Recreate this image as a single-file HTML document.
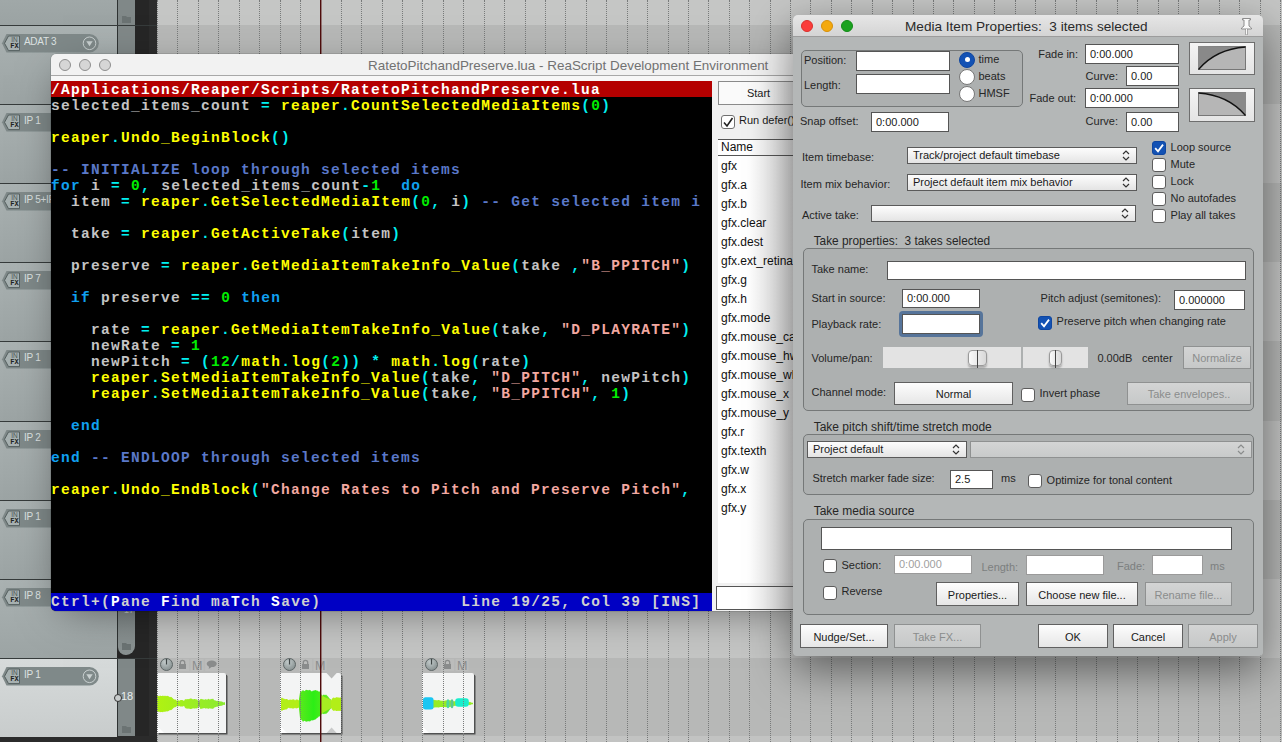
<!DOCTYPE html><html><head><meta charset="utf-8"><style>
*{box-sizing:border-box}
body{margin:0;width:1282px;height:742px;overflow:hidden;position:relative;background:#b6b7b6;font-family:"Liberation Sans",sans-serif}
.a{position:absolute}
.code{font-family:"Liberation Mono",monospace;font-weight:bold;font-size:14.5px;letter-spacing:1.3px;white-space:pre;line-height:16px}
.g{color:#c4c4c4}.c{color:#00f0f0}.y{color:#ffff00}.n{color:#00ee00}.k{color:#10a0f0}.m{color:#5a78c8}.s{color:#f2a8a0}
.dl{font-size:11px;color:#1c1c1c;white-space:pre;line-height:13px}
.inp{background:#fff;border:1px solid #555}
.grp{border:1px solid #757878;border-radius:5px;background:#adb0b0}
.btn{background:linear-gradient(#fdfdfd,#e6e6e6);border:1px solid #606060;font-size:11px;color:#1a1a1a;text-align:center;white-space:pre}
.btnd{background:linear-gradient(#d3d4d4,#c6c8c8);border:1px solid #8f9191;font-size:11px;color:#8a8c8c;text-align:center;white-space:pre}
.dd{background:linear-gradient(#fdfdfd,#e4e4e4);border:1px solid #5a5a5a;font-size:11px;color:#1a1a1a;white-space:pre}
.cb{background:#fff;border:1px solid #5c5c5c;border-radius:3px}
.cbc{background:#1352b4;border:1px solid #0f46a0;border-radius:3px}
.li{font-size:12px;color:#111;white-space:pre;line-height:14px}
</style></head><body>
<div class="a" style="left:157px;top:0;width:1125px;height:25px;background:#c5c6c5"></div>
<div class="a" style="left:157px;top:25px;width:1125px;height:79px;background:#b7b8b7"></div>
<div class="a" style="left:157px;top:104px;width:1125px;height:79px;background:#c4c5c4"></div>
<div class="a" style="left:157px;top:183px;width:1125px;height:79px;background:#b7b8b7"></div>
<div class="a" style="left:157px;top:262px;width:1125px;height:79px;background:#c4c5c4"></div>
<div class="a" style="left:157px;top:341px;width:1125px;height:80px;background:#b7b8b7"></div>
<div class="a" style="left:157px;top:421px;width:1125px;height:79px;background:#c4c5c4"></div>
<div class="a" style="left:157px;top:500px;width:1125px;height:79px;background:#b7b8b7"></div>
<div class="a" style="left:157px;top:579px;width:1125px;height:79px;background:#c4c5c4"></div>
<div class="a" style="left:157px;top:658px;width:1125px;height:79px;background:#b7b8b7"></div>
<div class="a" style="left:157px;top:736px;width:1125px;height:6px;background:#c2c3c2"></div>
<div class="a" style="left:0;top:736px;width:157px;height:6px;background:#2b2b2b"></div>
<div class="a" style="left:0;top:0;width:117px;height:736px;background:#a4abab"></div>
<div class="a" style="left:0;top:25px;width:117px;height:79px;background:linear-gradient(#aab2b2,#9ca4a4)"></div>
<div class="a" style="left:0;top:25px;width:157px;height:1px;background:#3a3f3f"></div>
<svg class="a" style="left:0;top:34px" width="100" height="20"><path d="M6.5 0 H89.5 A9.3 9.3 0 0 1 89.5 18.6 H6.5 L2 9.3 Z" fill="#7f8989"/><path d="M8.5 2 H19.5 V16.6 H8.5 L4.5 9.3 Z" fill="#a7b1b1" stroke="#566060" stroke-width="1"/><circle cx="89.5" cy="9.3" r="6.3" fill="none" stroke="#c9d0d0" stroke-width="1"/><path d="M86.3 7.3 H92.7 L89.5 12.3 Z" fill="#c9d0d0"/></svg>
<div class="a" style="left:9px;top:36px;width:11px;font:6.5px 'Liberation Sans';color:#4e5858;text-align:center;line-height:7px;letter-spacing:0px">IN</div>
<div class="a" style="left:9px;top:43px;width:11px;font:bold 7px 'Liberation Mono';color:#1e2424;text-align:center;line-height:7px;letter-spacing:0px">FX</div>
<div class="a" style="left:24px;top:35px;font-size:10px;letter-spacing:-0.3px;color:#dde2e2;white-space:pre;line-height:14px">ADAT 3</div>
<div class="a" style="left:0;top:104px;width:117px;height:79px;background:linear-gradient(#aab2b2,#9ca4a4)"></div>
<div class="a" style="left:0;top:104px;width:157px;height:1px;background:#3a3f3f"></div>
<svg class="a" style="left:0;top:113px" width="100" height="20"><path d="M6.5 0 H89.5 A9.3 9.3 0 0 1 89.5 18.6 H6.5 L2 9.3 Z" fill="#7f8989"/><path d="M8.5 2 H19.5 V16.6 H8.5 L4.5 9.3 Z" fill="#a7b1b1" stroke="#566060" stroke-width="1"/><circle cx="89.5" cy="9.3" r="6.3" fill="none" stroke="#c9d0d0" stroke-width="1"/><path d="M86.3 7.3 H92.7 L89.5 12.3 Z" fill="#c9d0d0"/></svg>
<div class="a" style="left:9px;top:115px;width:11px;font:6.5px 'Liberation Sans';color:#4e5858;text-align:center;line-height:7px;letter-spacing:0px">IN</div>
<div class="a" style="left:9px;top:122px;width:11px;font:bold 7px 'Liberation Mono';color:#1e2424;text-align:center;line-height:7px;letter-spacing:0px">FX</div>
<div class="a" style="left:24px;top:114px;font-size:10px;letter-spacing:-0.3px;color:#dde2e2;white-space:pre;line-height:14px">IP 1</div>
<div class="a" style="left:0;top:183px;width:117px;height:79px;background:linear-gradient(#aab2b2,#9ca4a4)"></div>
<div class="a" style="left:0;top:183px;width:157px;height:1px;background:#3a3f3f"></div>
<svg class="a" style="left:0;top:192px" width="100" height="20"><path d="M6.5 0 H89.5 A9.3 9.3 0 0 1 89.5 18.6 H6.5 L2 9.3 Z" fill="#7f8989"/><path d="M8.5 2 H19.5 V16.6 H8.5 L4.5 9.3 Z" fill="#a7b1b1" stroke="#566060" stroke-width="1"/><circle cx="89.5" cy="9.3" r="6.3" fill="none" stroke="#c9d0d0" stroke-width="1"/><path d="M86.3 7.3 H92.7 L89.5 12.3 Z" fill="#c9d0d0"/></svg>
<div class="a" style="left:9px;top:194px;width:11px;font:6.5px 'Liberation Sans';color:#4e5858;text-align:center;line-height:7px;letter-spacing:0px">IN</div>
<div class="a" style="left:9px;top:201px;width:11px;font:bold 7px 'Liberation Mono';color:#1e2424;text-align:center;line-height:7px;letter-spacing:0px">FX</div>
<div class="a" style="left:24px;top:193px;font-size:10px;letter-spacing:-0.3px;color:#dde2e2;white-space:pre;line-height:14px">IP 5+IP 6</div>
<div class="a" style="left:0;top:262px;width:117px;height:79px;background:linear-gradient(#aab2b2,#9ca4a4)"></div>
<div class="a" style="left:0;top:262px;width:157px;height:1px;background:#3a3f3f"></div>
<svg class="a" style="left:0;top:271px" width="100" height="20"><path d="M6.5 0 H89.5 A9.3 9.3 0 0 1 89.5 18.6 H6.5 L2 9.3 Z" fill="#7f8989"/><path d="M8.5 2 H19.5 V16.6 H8.5 L4.5 9.3 Z" fill="#a7b1b1" stroke="#566060" stroke-width="1"/><circle cx="89.5" cy="9.3" r="6.3" fill="none" stroke="#c9d0d0" stroke-width="1"/><path d="M86.3 7.3 H92.7 L89.5 12.3 Z" fill="#c9d0d0"/></svg>
<div class="a" style="left:9px;top:273px;width:11px;font:6.5px 'Liberation Sans';color:#4e5858;text-align:center;line-height:7px;letter-spacing:0px">IN</div>
<div class="a" style="left:9px;top:280px;width:11px;font:bold 7px 'Liberation Mono';color:#1e2424;text-align:center;line-height:7px;letter-spacing:0px">FX</div>
<div class="a" style="left:24px;top:272px;font-size:10px;letter-spacing:-0.3px;color:#dde2e2;white-space:pre;line-height:14px">IP 7</div>
<div class="a" style="left:0;top:341px;width:117px;height:80px;background:linear-gradient(#aab2b2,#9ca4a4)"></div>
<div class="a" style="left:0;top:341px;width:157px;height:1px;background:#3a3f3f"></div>
<svg class="a" style="left:0;top:350px" width="100" height="20"><path d="M6.5 0 H89.5 A9.3 9.3 0 0 1 89.5 18.6 H6.5 L2 9.3 Z" fill="#7f8989"/><path d="M8.5 2 H19.5 V16.6 H8.5 L4.5 9.3 Z" fill="#a7b1b1" stroke="#566060" stroke-width="1"/><circle cx="89.5" cy="9.3" r="6.3" fill="none" stroke="#c9d0d0" stroke-width="1"/><path d="M86.3 7.3 H92.7 L89.5 12.3 Z" fill="#c9d0d0"/></svg>
<div class="a" style="left:9px;top:352px;width:11px;font:6.5px 'Liberation Sans';color:#4e5858;text-align:center;line-height:7px;letter-spacing:0px">IN</div>
<div class="a" style="left:9px;top:359px;width:11px;font:bold 7px 'Liberation Mono';color:#1e2424;text-align:center;line-height:7px;letter-spacing:0px">FX</div>
<div class="a" style="left:24px;top:351px;font-size:10px;letter-spacing:-0.3px;color:#dde2e2;white-space:pre;line-height:14px">IP 1</div>
<div class="a" style="left:0;top:421px;width:117px;height:79px;background:linear-gradient(#aab2b2,#9ca4a4)"></div>
<div class="a" style="left:0;top:421px;width:157px;height:1px;background:#3a3f3f"></div>
<svg class="a" style="left:0;top:430px" width="100" height="20"><path d="M6.5 0 H89.5 A9.3 9.3 0 0 1 89.5 18.6 H6.5 L2 9.3 Z" fill="#7f8989"/><path d="M8.5 2 H19.5 V16.6 H8.5 L4.5 9.3 Z" fill="#a7b1b1" stroke="#566060" stroke-width="1"/><circle cx="89.5" cy="9.3" r="6.3" fill="none" stroke="#c9d0d0" stroke-width="1"/><path d="M86.3 7.3 H92.7 L89.5 12.3 Z" fill="#c9d0d0"/></svg>
<div class="a" style="left:9px;top:432px;width:11px;font:6.5px 'Liberation Sans';color:#4e5858;text-align:center;line-height:7px;letter-spacing:0px">IN</div>
<div class="a" style="left:9px;top:439px;width:11px;font:bold 7px 'Liberation Mono';color:#1e2424;text-align:center;line-height:7px;letter-spacing:0px">FX</div>
<div class="a" style="left:24px;top:431px;font-size:10px;letter-spacing:-0.3px;color:#dde2e2;white-space:pre;line-height:14px">IP 2</div>
<div class="a" style="left:0;top:500px;width:117px;height:79px;background:linear-gradient(#aab2b2,#9ca4a4)"></div>
<div class="a" style="left:0;top:500px;width:157px;height:1px;background:#3a3f3f"></div>
<svg class="a" style="left:0;top:509px" width="100" height="20"><path d="M6.5 0 H89.5 A9.3 9.3 0 0 1 89.5 18.6 H6.5 L2 9.3 Z" fill="#7f8989"/><path d="M8.5 2 H19.5 V16.6 H8.5 L4.5 9.3 Z" fill="#a7b1b1" stroke="#566060" stroke-width="1"/><circle cx="89.5" cy="9.3" r="6.3" fill="none" stroke="#c9d0d0" stroke-width="1"/><path d="M86.3 7.3 H92.7 L89.5 12.3 Z" fill="#c9d0d0"/></svg>
<div class="a" style="left:9px;top:511px;width:11px;font:6.5px 'Liberation Sans';color:#4e5858;text-align:center;line-height:7px;letter-spacing:0px">IN</div>
<div class="a" style="left:9px;top:518px;width:11px;font:bold 7px 'Liberation Mono';color:#1e2424;text-align:center;line-height:7px;letter-spacing:0px">FX</div>
<div class="a" style="left:24px;top:510px;font-size:10px;letter-spacing:-0.3px;color:#dde2e2;white-space:pre;line-height:14px">IP 1</div>
<div class="a" style="left:0;top:579px;width:117px;height:79px;background:linear-gradient(#aab2b2,#9ca4a4)"></div>
<div class="a" style="left:0;top:579px;width:157px;height:1px;background:#3a3f3f"></div>
<svg class="a" style="left:0;top:588px" width="100" height="20"><path d="M6.5 0 H89.5 A9.3 9.3 0 0 1 89.5 18.6 H6.5 L2 9.3 Z" fill="#7f8989"/><path d="M8.5 2 H19.5 V16.6 H8.5 L4.5 9.3 Z" fill="#a7b1b1" stroke="#566060" stroke-width="1"/><circle cx="89.5" cy="9.3" r="6.3" fill="none" stroke="#c9d0d0" stroke-width="1"/><path d="M86.3 7.3 H92.7 L89.5 12.3 Z" fill="#c9d0d0"/></svg>
<div class="a" style="left:9px;top:590px;width:11px;font:6.5px 'Liberation Sans';color:#4e5858;text-align:center;line-height:7px;letter-spacing:0px">IN</div>
<div class="a" style="left:9px;top:597px;width:11px;font:bold 7px 'Liberation Mono';color:#1e2424;text-align:center;line-height:7px;letter-spacing:0px">FX</div>
<div class="a" style="left:24px;top:589px;font-size:10px;letter-spacing:-0.3px;color:#dde2e2;white-space:pre;line-height:14px">IP 8</div>
<div class="a" style="left:0;top:658px;width:117px;height:79px;background:linear-gradient(#d7dbdb,#c8cccc)"></div>
<div class="a" style="left:0;top:658px;width:157px;height:1px;background:#3a3f3f"></div>
<svg class="a" style="left:0;top:667px" width="100" height="20"><path d="M6.5 0 H89.5 A9.3 9.3 0 0 1 89.5 18.6 H6.5 L2 9.3 Z" fill="#7f8989"/><path d="M8.5 2 H19.5 V16.6 H8.5 L4.5 9.3 Z" fill="#a7b1b1" stroke="#566060" stroke-width="1"/><circle cx="89.5" cy="9.3" r="6.3" fill="none" stroke="#c9d0d0" stroke-width="1"/><path d="M86.3 7.3 H92.7 L89.5 12.3 Z" fill="#c9d0d0"/></svg>
<div class="a" style="left:9px;top:669px;width:11px;font:6.5px 'Liberation Sans';color:#4e5858;text-align:center;line-height:7px;letter-spacing:0px">IN</div>
<div class="a" style="left:9px;top:676px;width:11px;font:bold 7px 'Liberation Mono';color:#1e2424;text-align:center;line-height:7px;letter-spacing:0px">FX</div>
<div class="a" style="left:24px;top:668px;font-size:10px;letter-spacing:-0.3px;color:#dde2e2;white-space:pre;line-height:14px">IP 1</div>
<div class="a" style="left:0;top:0;width:117px;height:25px;background:linear-gradient(#a0a8a8,#9ba3a3)"></div>
<div class="a" style="left:117px;top:0;width:1px;height:736px;background:#2e3232"></div>
<div class="a" style="left:118px;top:0;width:17px;height:736px;background:#808888"></div>
<div class="a" style="left:135px;top:0;width:14px;height:736px;background:#262626"></div>
<div class="a" style="left:149px;top:0;width:8px;height:736px;background:#2c2c2c"></div>
<div class="a" style="left:0;top:25px;width:157px;height:1px;background:#363b3b"></div>
<div class="a" style="left:0;top:104px;width:157px;height:1px;background:#363b3b"></div>
<div class="a" style="left:0;top:183px;width:157px;height:1px;background:#363b3b"></div>
<div class="a" style="left:0;top:262px;width:157px;height:1px;background:#363b3b"></div>
<div class="a" style="left:0;top:341px;width:157px;height:1px;background:#363b3b"></div>
<div class="a" style="left:0;top:421px;width:157px;height:1px;background:#363b3b"></div>
<div class="a" style="left:0;top:500px;width:157px;height:1px;background:#363b3b"></div>
<div class="a" style="left:0;top:579px;width:157px;height:1px;background:#363b3b"></div>
<div class="a" style="left:0;top:658px;width:157px;height:1px;background:#363b3b"></div>
<div class="a" style="left:117px;top:640px;width:19px;height:18px;background:#262626"></div>
<div class="a" style="left:117px;top:600px;width:18px;height:55px;background:#2e3232;border-radius:0 0 9px 9px"></div>
<div class="a" style="left:118px;top:600px;width:17px;height:55px;background:linear-gradient(#808888,#8a9292);border-radius:0 0 9px 8px"></div>
<svg class="a" style="left:122px;top:15px" width="9" height="8"><path d="M0 1 H4 L5 2 H9 V8 H0 Z" fill="#6b7373"/></svg>
<svg class="a" style="left:122px;top:642px" width="9" height="8"><path d="M0 1 H4 L5 2 H9 V8 H0 Z" fill="#6b7373"/></svg>
<svg class="a" style="left:122px;top:725px" width="9" height="8"><path d="M0 1 H4 L5 2 H9 V8 H0 Z" fill="#6b7373"/></svg>
<div class="a" style="left:121px;top:689px;font-size:11px;color:#e8eeee;line-height:14px">18</div>
<div class="a" style="left:114px;top:694px;width:8px;height:8px;border-radius:50%;background:#c8cccc;border:1.5px solid #333"></div>
<div class="a" style="left:124px;top:605px;font-size:9px;color:#c8cece;line-height:10px">17</div>
<div class="a" style="left:157px;top:673px;width:69px;height:60px;background:#f3f4f4;border-radius:0 2px 0 0;box-shadow:1.5px 1.5px 0 #505151"></div>
<svg class="a" style="left:0;top:0" width="1282" height="742"><defs><linearGradient id="w1" x1="0" x2="1"><stop offset="0" stop-color="#b0f212"/><stop offset="1" stop-color="#8aea30"/></linearGradient><linearGradient id="w2" x1="0" x2="1"><stop offset="0" stop-color="#5ee81e"/><stop offset="0.45" stop-color="#2cee16"/><stop offset="1" stop-color="#70e622"/></linearGradient></defs><polygon points="157,696.0 158,695.7 159,696.4 160,695.4 161,696.1 162,695.9 163,695.5 164,696.3 165,695.6 166,696.3 167,695.8 168,696.0 169,696.6 170,697.3 171,696.7 172,697.4 173,698.6 174,699.6 175,699.6 176,699.8 177,701.3 178,699.8 179,701.1 180,700.2 181,699.9 182,699.9 183,700.2 184,701.0 185,699.3 186,699.2 187,699.3 188,698.9 189,699.2 190,698.5 191,698.5 192,698.7 193,699.5 194,699.1 195,699.0 196,699.4 197,699.2 198,700.7 199,703.0 200,699.5 201,698.8 202,699.3 203,699.3 204,699.8 205,699.6 206,698.9 207,700.0 208,698.7 209,699.1 210,699.7 211,698.7 212,699.3 213,698.6 214,700.0 215,700.5 216,700.6 217,701.3 218,700.5 219,701.3 220,701.3 221,701.5 222,701.4 223,702.2 224,702.5 225,702.0 225,705.0 224,704.7 223,705.1 222,705.7 221,705.8 220,706.0 219,706.1 218,706.8 217,706.4 216,706.9 215,707.2 214,707.7 213,708.9 212,708.4 211,708.8 210,708.2 209,708.6 208,708.9 207,708.0 206,708.7 205,708.3 204,708.1 203,708.5 202,708.5 201,708.9 200,708.4 199,704.2 198,707.2 197,708.5 196,708.3 195,708.6 194,708.5 193,708.3 192,708.8 191,709.0 190,709.0 189,708.5 188,708.7 187,708.4 186,708.5 185,707.8 184,705.8 183,706.4 182,706.6 181,706.6 180,706.4 179,705.8 178,706.7 177,705.7 176,706.9 175,707.3 174,707.5 173,708.5 172,709.6 171,710.3 170,710.1 169,710.8 168,711.3 167,711.5 166,711.2 165,711.9 164,711.5 163,712.2 162,712.0 161,712.0 160,712.3 159,711.5 158,711.9 157,711.6" fill="url(#w1)"/><path d="M199 700 V707" stroke="#7a9050" stroke-width="1"/></svg>
<svg class="a" style="left:0;top:0" width="1282" height="742"><defs><radialGradient id="kn" cx="0.4" cy="0.3" r="0.8"><stop offset="0" stop-color="#c4cccc"/><stop offset="1" stop-color="#7f8989"/></radialGradient></defs><circle cx="166.5" cy="664.5" r="6" fill="url(#kn)" stroke="#5f6767" stroke-width="1"/><path d="M166.5 658.8 V664.5" stroke="#3f4646" stroke-width="1.2"/><polygon points="157,726 157,733 164,733" fill="#ffffff"/><rect x="176.0" y="659" width="13" height="12" fill="#bcbdbc"/><rect x="179.0" y="664" width="7" height="5" fill="#8a8c8c"/><path d="M180.3 664.5 V662.5 A2.2 2.2 0 0 1 184.7 662.5 V664.5" fill="none" stroke="#8a8c8c" stroke-width="1.3"/><rect x="190.6" y="659" width="13" height="12" fill="#bcbdbc"/><text x="197.1" y="669.8" text-anchor="middle" font-family="Liberation Sans" font-size="12.5" fill="#8c8e8e">M</text><rect x="205.2" y="659" width="13" height="12" fill="#bcbdbc"/><ellipse cx="211.7" cy="663.8" rx="5" ry="3.3" fill="#8a8c8c"/><path d="M209.2 666 L208.7 669 L212.2 666.5Z" fill="#8a8c8c"/></svg>
<div class="a" style="left:280px;top:673px;width:61px;height:60px;background:#f3f4f4;border-radius:0 2px 0 0;box-shadow:1.5px 1.5px 0 #505151"></div>
<svg class="a" style="left:0;top:0" width="1282" height="742"><defs><linearGradient id="w1" x1="0" x2="1"><stop offset="0" stop-color="#b0f212"/><stop offset="1" stop-color="#8aea30"/></linearGradient><linearGradient id="w2" x1="0" x2="1"><stop offset="0" stop-color="#5ee81e"/><stop offset="0.45" stop-color="#2cee16"/><stop offset="1" stop-color="#70e622"/></linearGradient></defs><polygon points="281,698.5 282,697.6 283,698.6 284,698.6 285,699.2 286,699.0 287,698.9 288,699.8 289,700.3 290,699.2 291,699.9 292,699.5 293,699.4 294,699.3 295,700.4 296,699.4 297,699.6 298,699.8 299,700.6 300,699.3 301,699.9 302,700.1 303,700.6 304,700.5 305,700.6 306,699.6 307,699.9 308,699.8 309,700.6 310,700.7 311,699.4 312,699.5 313,699.6 314,699.6 315,700.0 316,700.1 317,699.6 318,699.2 319,699.9 320,699.8 321,700.1 322,700.7 323,700.3 324,700.0 325,700.2 326,700.3 327,699.3 328,700.6 329,700.4 330,700.6 331,700.5 332,698.8 333,697.8 334,697.4 335,698.2 336,697.3 337,697.3 338,697.5 339,697.5 340,697.7 341,697.3 341,711.0 340,710.7 339,710.9 338,710.8 337,711.0 336,711.0 335,710.3 334,710.9 333,710.6 332,709.4 331,707.7 330,707.6 329,707.7 328,707.6 327,708.5 326,707.8 325,707.9 324,708.0 323,707.8 322,707.5 321,707.9 320,708.1 319,708.1 318,708.6 317,708.3 316,707.9 315,708.0 314,708.3 313,708.3 312,708.4 311,708.4 310,707.5 309,707.6 308,708.2 307,708.1 306,708.2 305,707.6 304,707.6 303,707.6 302,707.9 301,708.1 300,708.5 299,707.6 298,708.1 297,708.3 296,708.4 295,707.7 294,708.5 293,708.4 292,708.4 291,708.0 290,708.5 289,707.8 288,708.1 287,709.2 286,709.6 285,709.5 284,710.0 283,710.1 282,710.9 281,710.3" fill="#b2ee18"/><polygon points="299,699.0 300,692.4 301,691.5 302,691.2 303,689.7 304,691.3 305,690.8 306,689.8 307,690.0 308,690.2 309,690.2 310,689.7 311,691.1 312,691.4 313,690.5 314,690.7 315,690.0 316,690.2 317,690.8 318,690.8 319,692.1 320,690.9 321,693.9 322,695.9 323,695.1 324,694.5 325,695.3 326,694.4 327,695.5 328,696.5 329,697.7 330,698.9 331,699.5 331,708.3 330,709.4 329,710.8 328,712.3 327,713.1 326,714.0 325,713.5 324,714.2 323,713.8 322,713.4 321,714.9 320,716.5 319,716.2 318,717.6 317,718.1 316,719.1 315,719.7 314,719.8 313,720.4 312,720.3 311,720.5 310,721.6 309,721.3 308,721.3 307,721.5 306,721.7 305,721.1 304,720.7 303,722.0 302,720.3 301,719.4 300,718.1 299,708.7" fill="url(#w2)"/><polygon points="320.5,694.9 331,700 331,708 320.5,714.2" fill="#a6ec22"/><polygon points="326.5,673 336.7,673 331.6,678.5" fill="#b7b8b7"/><polygon points="326.5,733 336.7,733 331.6,727.5" fill="#c9caca"/></svg>
<svg class="a" style="left:0;top:0" width="1282" height="742"><defs><radialGradient id="kn" cx="0.4" cy="0.3" r="0.8"><stop offset="0" stop-color="#c4cccc"/><stop offset="1" stop-color="#7f8989"/></radialGradient></defs><circle cx="289.5" cy="664.5" r="6" fill="url(#kn)" stroke="#5f6767" stroke-width="1"/><path d="M289.5 658.8 V664.5" stroke="#3f4646" stroke-width="1.2"/><polygon points="280,726 280,733 287,733" fill="#ffffff"/><rect x="299.0" y="659" width="13" height="12" fill="#bcbdbc"/><rect x="302.0" y="664" width="7" height="5" fill="#8a8c8c"/><path d="M303.3 664.5 V662.5 A2.2 2.2 0 0 1 307.7 662.5 V664.5" fill="none" stroke="#8a8c8c" stroke-width="1.3"/><rect x="313.6" y="659" width="13" height="12" fill="#bcbdbc"/><text x="320.1" y="669.8" text-anchor="middle" font-family="Liberation Sans" font-size="12.5" fill="#8c8e8e">M</text></svg>
<div class="a" style="left:422px;top:673px;width:52px;height:60px;background:#f3f4f4;border-radius:0 2px 0 0;box-shadow:1.5px 1.5px 0 #505151"></div>
<svg class="a" style="left:0;top:0" width="1282" height="742"><polygon points="433,699.9 434,699.7 435,700.3 436,700.1 437,700.4 438,700.0 439,700.0 440,700.6 441,700.8 442,700.7 443,700.7 444,700.7 445,700.7 446,700.2 447,700.6 448,700.5 449,700.2 450,700.3 451,700.6 452,700.6 453,701.1 454,701.4 455,700.9 456,701.5 457,701.6 458,701.7 459,701.2 460,701.1 461,701.2 462,701.2 463,701.3 464,701.8 465,702.1 466,702.1 467,701.8 468,702.1 469,702.3 470,701.7 471,702.4 472,702.8 473,702.8 473,704.3 472,704.3 471,704.6 470,705.2 469,704.8 468,705.0 467,705.2 466,705.0 465,705.0 464,705.3 463,705.6 462,705.7 461,705.8 460,705.8 459,705.8 458,705.5 457,705.5 456,705.6 455,706.0 454,705.8 453,706.1 452,706.5 451,706.6 450,706.9 449,707.0 448,706.9 447,706.9 446,707.2 445,706.9 444,706.9 443,706.9 442,706.9 441,706.9 440,707.1 439,707.5 438,707.5 437,707.2 436,707.4 435,707.3 434,707.8 433,707.7" fill="#96ec24"/><rect x="423" y="697.2" width="10.5" height="12.3" rx="2.5" fill="#1ac6f2"/><ellipse cx="448" cy="703.8" rx="1.6" ry="4.5" fill="#48d8a0"/><ellipse cx="452" cy="703.8" rx="1.6" ry="4.5" fill="#58c890"/><rect x="455.2" y="698.2" width="13.6" height="8.5" rx="3" fill="#18eecc"/></svg>
<svg class="a" style="left:0;top:0" width="1282" height="742"><defs><radialGradient id="kn" cx="0.4" cy="0.3" r="0.8"><stop offset="0" stop-color="#c4cccc"/><stop offset="1" stop-color="#7f8989"/></radialGradient></defs><circle cx="431.5" cy="664.5" r="6" fill="url(#kn)" stroke="#5f6767" stroke-width="1"/><path d="M431.5 658.8 V664.5" stroke="#3f4646" stroke-width="1.2"/><polygon points="422,726 422,733 429,733" fill="#ffffff"/><rect x="441.0" y="659" width="13" height="12" fill="#bcbdbc"/><rect x="444.0" y="664" width="7" height="5" fill="#8a8c8c"/><path d="M445.3 664.5 V662.5 A2.2 2.2 0 0 1 449.7 662.5 V664.5" fill="none" stroke="#8a8c8c" stroke-width="1.3"/><rect x="455.6" y="659" width="13" height="12" fill="#bcbdbc"/><text x="462.1" y="669.8" text-anchor="middle" font-family="Liberation Sans" font-size="12.5" fill="#8c8e8e">M</text></svg>
<div class="a" style="left:157px;top:0;width:1px;height:742px;border-left:1px dotted #787a7a"></div>
<div class="a" style="left:177px;top:0;width:1px;height:742px;border-left:1px dotted #787a7a"></div>
<div class="a" style="left:198px;top:0;width:1px;height:742px;border-left:1px dotted #787a7a"></div>
<div class="a" style="left:218px;top:0;width:1px;height:742px;border-left:1px dotted #787a7a"></div>
<div class="a" style="left:239px;top:0;width:1px;height:742px;border-left:1px dotted #787a7a"></div>
<div class="a" style="left:259px;top:0;width:1px;height:742px;border-left:1px dotted #787a7a"></div>
<div class="a" style="left:280px;top:0;width:1px;height:742px;border-left:1px dotted #787a7a"></div>
<div class="a" style="left:300px;top:0;width:1px;height:742px;border-left:1px dotted #787a7a"></div>
<div class="a" style="left:320px;top:0;width:1px;height:742px;border-left:1px dotted #787a7a"></div>
<div class="a" style="left:341px;top:0;width:1px;height:742px;border-left:1px dotted #787a7a"></div>
<div class="a" style="left:361px;top:0;width:1px;height:742px;border-left:1px dotted #787a7a"></div>
<div class="a" style="left:382px;top:0;width:1px;height:742px;border-left:1px dotted #787a7a"></div>
<div class="a" style="left:402px;top:0;width:1px;height:742px;border-left:1px dotted #787a7a"></div>
<div class="a" style="left:422px;top:0;width:1px;height:742px;border-left:1px dotted #787a7a"></div>
<div class="a" style="left:443px;top:0;width:1px;height:742px;border-left:1px dotted #787a7a"></div>
<div class="a" style="left:463px;top:0;width:1px;height:742px;border-left:1px dotted #787a7a"></div>
<div class="a" style="left:484px;top:0;width:1px;height:742px;border-left:1px dotted #787a7a"></div>
<div class="a" style="left:504px;top:0;width:1px;height:742px;border-left:1px dotted #787a7a"></div>
<div class="a" style="left:525px;top:0;width:1px;height:742px;border-left:1px dotted #787a7a"></div>
<div class="a" style="left:545px;top:0;width:1px;height:742px;border-left:1px dotted #787a7a"></div>
<div class="a" style="left:565px;top:0;width:1px;height:742px;border-left:1px dotted #787a7a"></div>
<div class="a" style="left:586px;top:0;width:1px;height:742px;border-left:1px dotted #787a7a"></div>
<div class="a" style="left:606px;top:0;width:1px;height:742px;border-left:1px dotted #787a7a"></div>
<div class="a" style="left:627px;top:0;width:1px;height:742px;border-left:1px dotted #787a7a"></div>
<div class="a" style="left:647px;top:0;width:1px;height:742px;border-left:1px dotted #787a7a"></div>
<div class="a" style="left:668px;top:0;width:1px;height:742px;border-left:1px dotted #787a7a"></div>
<div class="a" style="left:688px;top:0;width:1px;height:742px;border-left:1px dotted #787a7a"></div>
<div class="a" style="left:708px;top:0;width:1px;height:742px;border-left:1px dotted #787a7a"></div>
<div class="a" style="left:729px;top:0;width:1px;height:742px;border-left:1px dotted #787a7a"></div>
<div class="a" style="left:749px;top:0;width:1px;height:742px;border-left:1px dotted #787a7a"></div>
<div class="a" style="left:770px;top:0;width:1px;height:742px;border-left:1px dotted #787a7a"></div>
<div class="a" style="left:790px;top:0;width:1px;height:742px;border-left:1px dotted #787a7a"></div>
<div class="a" style="left:810px;top:0;width:1px;height:742px;border-left:1px dotted #787a7a"></div>
<div class="a" style="left:831px;top:0;width:1px;height:742px;border-left:1px dotted #787a7a"></div>
<div class="a" style="left:851px;top:0;width:1px;height:742px;border-left:1px dotted #787a7a"></div>
<div class="a" style="left:872px;top:0;width:1px;height:742px;border-left:1px dotted #787a7a"></div>
<div class="a" style="left:892px;top:0;width:1px;height:742px;border-left:1px dotted #787a7a"></div>
<div class="a" style="left:913px;top:0;width:1px;height:742px;border-left:1px dotted #787a7a"></div>
<div class="a" style="left:933px;top:0;width:1px;height:742px;border-left:1px dotted #787a7a"></div>
<div class="a" style="left:953px;top:0;width:1px;height:742px;border-left:1px dotted #787a7a"></div>
<div class="a" style="left:974px;top:0;width:1px;height:742px;border-left:1px dotted #787a7a"></div>
<div class="a" style="left:994px;top:0;width:1px;height:742px;border-left:1px dotted #787a7a"></div>
<div class="a" style="left:1015px;top:0;width:1px;height:742px;border-left:1px dotted #787a7a"></div>
<div class="a" style="left:1035px;top:0;width:1px;height:742px;border-left:1px dotted #787a7a"></div>
<div class="a" style="left:1055px;top:0;width:1px;height:742px;border-left:1px dotted #787a7a"></div>
<div class="a" style="left:1076px;top:0;width:1px;height:742px;border-left:1px dotted #787a7a"></div>
<div class="a" style="left:1096px;top:0;width:1px;height:742px;border-left:1px dotted #787a7a"></div>
<div class="a" style="left:1117px;top:0;width:1px;height:742px;border-left:1px dotted #787a7a"></div>
<div class="a" style="left:1137px;top:0;width:1px;height:742px;border-left:1px dotted #787a7a"></div>
<div class="a" style="left:1158px;top:0;width:1px;height:742px;border-left:1px dotted #787a7a"></div>
<div class="a" style="left:1178px;top:0;width:1px;height:742px;border-left:1px dotted #787a7a"></div>
<div class="a" style="left:1198px;top:0;width:1px;height:742px;border-left:1px dotted #787a7a"></div>
<div class="a" style="left:1219px;top:0;width:1px;height:742px;border-left:1px dotted #787a7a"></div>
<div class="a" style="left:1239px;top:0;width:1px;height:742px;border-left:1px dotted #787a7a"></div>
<div class="a" style="left:1260px;top:0;width:1px;height:742px;border-left:1px dotted #787a7a"></div>
<div class="a" style="left:1280px;top:0;width:1px;height:742px;border-left:1px dotted #787a7a"></div>
<div class="a" style="left:320px;top:0;width:1px;height:742px;background:#4e0c0c"></div><div class="a" style="left:321px;top:0;width:1px;height:742px;background:rgba(90,20,20,0.45)"></div>
<div class="a" style="left:51px;top:54px;width:760px;height:557px;box-shadow:0 9px 40px -12px rgba(0,0,0,0.5),0 0 0 0.5px rgba(0,0,0,0.2);border-radius:5px 5px 5px 5px"></div>
<div class="a" style="left:51px;top:54px;width:760px;height:22px;background:#f2f2f2;border-radius:5px 5px 0 0;border-bottom:1px solid #a8a8a8"></div>
<div class="a" style="left:59px;top:59px;width:12px;height:12px;border-radius:50%;background:#d6d6d6;border:1px solid #8e8e8e"></div>
<div class="a" style="left:79px;top:59px;width:12px;height:12px;border-radius:50%;background:#d6d6d6;border:1px solid #8e8e8e"></div>
<div class="a" style="left:99px;top:59px;width:12px;height:12px;border-radius:50%;background:#d6d6d6;border:1px solid #8e8e8e"></div>
<div class="a" style="left:368px;top:58px;font-size:13.45px;color:#717171;white-space:pre;line-height:16px">RatetoPitchandPreserve.lua - ReaScript Development Environment</div>
<div class="a" style="left:51px;top:76px;width:760px;height:5px;background:#f7f7f7"></div>
<div class="a" style="left:51px;top:81px;width:661px;height:530px;background:#000;border-radius:0 0 0 5px"></div>
<div class="a" style="left:51px;top:81px;width:661px;height:16px;background:#b40000"></div>
<div class="a" style="left:51px;top:593px;width:661px;height:18px;background:#0000c4;border-radius:0 0 0 5px"></div>
<div class="a code" style="left:51px;top:82px;color:#fff">/Applications/Reaper/Scripts/RatetoPitchandPreserve.lua</div>
<div class="a code" style="left:51px;top:98px;width:661px;height:490px;overflow:hidden"><span class="g">selected_items_count</span> <span class="c">=</span> <span class="y">reaper</span><span class="c">.</span><span class="y">CountSelectedMediaItems</span><span class="c">(</span><span class="n">0</span><span class="c">)</span>

<span class="y">reaper</span><span class="c">.</span><span class="y">Undo_BeginBlock</span><span class="c">(</span><span class="c">)</span>

<span class="m">-- INITIALIZE loop through selected items</span>
<span class="k">for</span> <span class="g">i</span> <span class="c">=</span> <span class="n">0</span><span class="c">,</span> <span class="g">selected_items_count</span><span class="c">-</span><span class="n">1</span>  <span class="k">do</span>
  <span class="g">item</span> <span class="c">=</span> <span class="y">reaper</span><span class="c">.</span><span class="y">GetSelectedMediaItem</span><span class="c">(</span><span class="n">0</span><span class="c">,</span> <span class="g">i</span><span class="c">)</span> <span class="m">-- Get selected item i</span>

  <span class="g">take</span> <span class="c">=</span> <span class="y">reaper</span><span class="c">.</span><span class="y">GetActiveTake</span><span class="c">(</span><span class="g">item</span><span class="c">)</span>

  <span class="g">preserve</span> <span class="c">=</span> <span class="y">reaper</span><span class="c">.</span><span class="y">GetMediaItemTakeInfo_Value</span><span class="c">(</span><span class="g">take</span> <span class="c">,</span><span class="s">&quot;B_PPITCH&quot;</span><span class="c">)</span>

  <span class="k">if</span> <span class="g">preserve</span> <span class="c">=</span><span class="c">=</span> <span class="n">0</span> <span class="k">then</span>

    <span class="g">rate</span> <span class="c">=</span> <span class="y">reaper</span><span class="c">.</span><span class="y">GetMediaItemTakeInfo_Value</span><span class="c">(</span><span class="g">take</span><span class="c">,</span> <span class="s">&quot;D_PLAYRATE&quot;</span><span class="c">)</span>
    <span class="g">newRate</span> <span class="c">=</span> <span class="n">1</span>
    <span class="g">newPitch</span> <span class="c">=</span> <span class="c">(</span><span class="n">12</span><span class="c">/</span><span class="y">math</span><span class="c">.</span><span class="y">log</span><span class="c">(</span><span class="n">2</span><span class="c">)</span><span class="c">)</span> <span class="c">*</span> <span class="y">math</span><span class="c">.</span><span class="y">log</span><span class="c">(</span><span class="g">rate</span><span class="c">)</span>
    <span class="y">reaper</span><span class="c">.</span><span class="y">SetMediaItemTakeInfo_Value</span><span class="c">(</span><span class="g">take</span><span class="c">,</span> <span class="s">&quot;D_PITCH&quot;</span><span class="c">,</span> <span class="g">newPitch</span><span class="c">)</span>
    <span class="y">reaper</span><span class="c">.</span><span class="y">SetMediaItemTakeInfo_Value</span><span class="c">(</span><span class="g">take</span><span class="c">,</span> <span class="s">&quot;B_PPITCH&quot;</span><span class="c">,</span> <span class="n">1</span><span class="c">)</span>

  <span class="k">end</span>

<span class="k">end</span> <span class="m">-- ENDLOOP through selected items</span>

<span class="y">reaper</span><span class="c">.</span><span class="y">Undo_EndBlock</span><span class="c">(</span><span class="s">&quot;Change Rates to Pitch and Preserve Pitch&quot;</span><span class="c">,</span></div>
<div class="a code" style="left:51px;top:594px;color:#d0d0d0">Ctrl+(<span style="color:#fff">P</span>ane <span style="color:#fff">F</span>ind ma<span style="color:#fff">T</span>ch <span style="color:#fff">S</span>ave)              Line 19/25, Col 39 [INS]</div>
<div class="a" style="left:712px;top:81px;width:99px;height:530px;background:linear-gradient(90deg,#f1f1f1 0,#f1f1f1 40px,#d6d6d6 81px)"></div>
<div class="a" style="left:718px;top:139px;width:93px;height:444px;background:linear-gradient(90deg,#fff 0,#fff 30px,#dcdcdc 75px)"></div>
<div class="a btn" style="left:718px;top:81px;width:95px;height:24px;line-height:22px;padding-right:14px;border-color:#8a8a8a;background:linear-gradient(90deg,#fafafa 40px,#dcdcdc 75px)">Start</div>
<div class="a" style="left:721px;top:115px;width:14px;height:14px;border:1px solid #707070;border-radius:3px;background:#fff"></div>
<svg class="a" style="left:721px;top:115px" width="14" height="14"><path d="M3 7.5 L6 11 L11.5 3" fill="none" stroke="#222" stroke-width="1.6"/></svg>
<div class="a" style="left:739px;top:114px;font-size:11px;color:#1a1a1a;white-space:pre;line-height:13px">Run defer()</div>
<div class="a" style="left:718px;top:139px;width:93px;height:1px;background:#555"></div>
<div class="a" style="left:718px;top:155px;width:93px;height:1px;background:#555"></div>
<div class="a li" style="left:721px;top:140px">Name</div>
<div class="a li" style="left:721px;top:159px">gfx</div>
<div class="a li" style="left:721px;top:178px">gfx.a</div>
<div class="a li" style="left:721px;top:197px">gfx.b</div>
<div class="a li" style="left:721px;top:216px">gfx.clear</div>
<div class="a li" style="left:721px;top:235px">gfx.dest</div>
<div class="a li" style="left:721px;top:254px">gfx.ext_retina</div>
<div class="a li" style="left:721px;top:273px">gfx.g</div>
<div class="a li" style="left:721px;top:292px">gfx.h</div>
<div class="a li" style="left:721px;top:311px">gfx.mode</div>
<div class="a li" style="left:721px;top:330px">gfx.mouse_cap</div>
<div class="a li" style="left:721px;top:349px">gfx.mouse_hwheel</div>
<div class="a li" style="left:721px;top:368px">gfx.mouse_wheel</div>
<div class="a li" style="left:721px;top:387px">gfx.mouse_x</div>
<div class="a li" style="left:721px;top:406px">gfx.mouse_y</div>
<div class="a li" style="left:721px;top:425px">gfx.r</div>
<div class="a li" style="left:721px;top:444px">gfx.texth</div>
<div class="a li" style="left:721px;top:463px">gfx.w</div>
<div class="a li" style="left:721px;top:482px">gfx.x</div>
<div class="a li" style="left:721px;top:501px">gfx.y</div>
<div class="a" style="left:716px;top:586px;width:95px;height:24px;border:1px solid #555;background:linear-gradient(90deg,#fff 30px,#dcdcdc 75px)"></div>
<div class="a" style="left:793px;top:15px;width:470px;height:641px;border-radius:5px 5px 5px 5px;box-shadow:0 14px 44px rgba(0,0,0,0.5)"></div>
<div class="a " style="left:793px;top:15px;width:470px;height:641px;background:#b4b7b7;border-radius:5px 5px 4px 4px"></div>
<div class="a " style="left:793px;top:15px;width:470px;height:22px;background:linear-gradient(#e6e6e6,#d4d4d4);border-radius:5px 5px 0 0;border-bottom:1px solid #9c9c9c"></div>
<div class="a" style="left:801px;top:20px;width:12px;height:12px;border-radius:50%;background:#fb3d3b;border:1px solid #d8302c"></div>
<div class="a" style="left:821px;top:20px;width:12px;height:12px;border-radius:50%;background:#f4a90d;border:1px solid #d68f0a"></div>
<div class="a" style="left:841px;top:20px;width:12px;height:12px;border-radius:50%;background:#1ba21f;border:1px solid #128a16"></div>
<div class="a" style="left:905px;top:19px;font-size:13.6px;color:#2a2a2a;white-space:pre;line-height:16px">Media Item Properties:  3 items selected</div>
<svg class="a" style="left:1238px;top:17px" width="17" height="19"><path d="M4.5 1.5 H12.5 V3 H11 V9 L13.5 11 V12 H3.5 V11 L6 9 V3 H4.5 Z" fill="#fafafa" stroke="#8c8c8c" stroke-width="1"/><path d="M8.5 12 V18" stroke="#8c8c8c" stroke-width="2.2"/><path d="M8.5 12 V17.5" stroke="#fafafa" stroke-width="1"/></svg>
<div class="a grp" style="left:801px;top:50px;width:222px;height:57px;"></div>
<div class="a dl" style="left:804px;top:53.0px;font-size:11px;line-height:14px;color:#262626;">Position:</div>
<div class="a inp dl" style="left:856px;top:51px;width:94px;height:20px;line-height:18px;padding-left:4px;color:#1a1a1a"></div>
<div class="a dl" style="left:804px;top:77.5px;font-size:11px;line-height:14px;color:#262626;">Length:</div>
<div class="a inp dl" style="left:856px;top:74px;width:94px;height:20px;line-height:18px;padding-left:4px;color:#1a1a1a"></div>
<div class="a" style="left:959px;top:51.7px;width:16px;height:16px;border-radius:50%;background:#1352b4;border:1px solid #0f46a0"></div>
<div class="a" style="left:964.5px;top:57.2px;width:5px;height:5px;border-radius:50%;background:#fff"></div>
<div class="a dl" style="left:978.5px;top:51.7px;font-size:11px;line-height:14px;color:#262626;">time</div>
<div class="a" style="left:959px;top:68.5px;width:16px;height:16px;border-radius:50%;background:#fff;border:1px solid #777"></div>
<div class="a dl" style="left:978.5px;top:68.5px;font-size:11px;line-height:14px;color:#262626;">beats</div>
<div class="a" style="left:959px;top:85.7px;width:16px;height:16px;border-radius:50%;background:#fff;border:1px solid #777"></div>
<div class="a dl" style="left:978.5px;top:85.7px;font-size:11px;line-height:14px;color:#262626;">HMSF</div>
<div class="a dl" style="left:800px;top:114.0px;font-size:11px;line-height:14px;color:#262626;">Snap offset:</div>
<div class="a inp dl" style="left:871px;top:112px;width:78px;height:20px;line-height:18px;padding-left:4px;color:#1a1a1a">0:00.000</div>
<div class="a dl" style="right:204px;top:47.0px;font-size:11px;line-height:14px;color:#262626;">Fade in:</div>
<div class="a inp dl" style="left:1085px;top:44px;width:94px;height:20px;line-height:18px;padding-left:4px;color:#1a1a1a">0:00.000</div>
<div class="a dl" style="right:164px;top:69.0px;font-size:11px;line-height:14px;color:#262626;">Curve:</div>
<div class="a inp dl" style="left:1126px;top:66px;width:53px;height:20px;line-height:18px;padding-left:4px;color:#1a1a1a">0.00</div>
<div class="a dl" style="right:206px;top:90.5px;font-size:11px;line-height:14px;color:#262626;">Fade out:</div>
<div class="a inp dl" style="left:1085px;top:88px;width:94px;height:20px;line-height:18px;padding-left:4px;color:#1a1a1a">0:00.000</div>
<div class="a dl" style="right:164px;top:114.0px;font-size:11px;line-height:14px;color:#262626;">Curve:</div>
<div class="a inp dl" style="left:1126px;top:112px;width:53px;height:20px;line-height:18px;padding-left:4px;color:#1a1a1a">0.00</div>
<div class="a " style="left:1189px;top:42px;width:66px;height:33px;background:linear-gradient(#f4f4f4,#e4e4e4);border:1px solid #6e6e6e"></div>
<svg class="a" style="left:1198px;top:46px" width="48" height="24"><rect x="0.5" y="0.5" width="47" height="23" fill="#b6b6b6" stroke="#777"/><path d="M0 24 Q18 3 48 1 L0 0 Z" fill="#898989"/><path d="M0.5 23.5 Q18 3 47.5 1" fill="none" stroke="#111" stroke-width="1.3"/></svg>
<div class="a " style="left:1189px;top:88px;width:66px;height:34px;background:linear-gradient(#f4f4f4,#e4e4e4);border:1px solid #6e6e6e"></div>
<svg class="a" style="left:1198px;top:92px" width="48" height="24"><rect x="0.5" y="0.5" width="47" height="23" fill="#b6b6b6" stroke="#777"/><path d="M0 1 Q30 3 48 24 L48 0 Z" fill="#898989"/><path d="M0.5 1 Q30 3 47.5 23.5" fill="none" stroke="#111" stroke-width="1.3"/></svg>
<div class="a dl" style="left:802px;top:150.0px;font-size:11px;line-height:14px;color:#262626;">Item timebase:</div>
<div class="a dd" style="left:907px;top:147px;width:230px;height:17px;line-height:15px;padding-left:5px;">Track/project default timebase</div>
<svg class="a" style="left:1121px;top:149px" width="10" height="13"><path d="M2 5 L5 2 L8 5 M2 8 L5 11 L8 8" fill="none" stroke="#333" stroke-width="1.2"/></svg>
<div class="a dl" style="left:800.5px;top:177.0px;font-size:11px;line-height:14px;color:#262626;">Item mix behavior:</div>
<div class="a dd" style="left:907px;top:174px;width:230px;height:17px;line-height:15px;padding-left:5px;">Project default item mix behavior</div>
<svg class="a" style="left:1121px;top:176px" width="10" height="13"><path d="M2 5 L5 2 L8 5 M2 8 L5 11 L8 8" fill="none" stroke="#333" stroke-width="1.2"/></svg>
<div class="a dl" style="left:802px;top:208.0px;font-size:11px;line-height:14px;color:#262626;">Active take:</div>
<div class="a dd" style="left:871px;top:205px;width:265px;height:17px;line-height:15px;padding-left:5px;"></div>
<svg class="a" style="left:1120px;top:207px" width="10" height="13"><path d="M2 5 L5 2 L8 5 M2 8 L5 11 L8 8" fill="none" stroke="#333" stroke-width="1.2"/></svg>
<div class="a cbc" style="left:1152px;top:141px;width:14px;height:14px"></div>
<svg class="a" style="left:1152px;top:141px" width="14" height="14"><path d="M3.2 7.2 L6 10.3 L11 3.6" fill="none" stroke="#fff" stroke-width="1.8"/></svg>
<div class="a dl" style="left:1170.6px;top:139.5px;font-size:11px;line-height:14px;color:#262626;">Loop source</div>
<div class="a cb" style="left:1152px;top:158px;width:14px;height:14px"></div>
<div class="a dl" style="left:1170.6px;top:156.5px;font-size:11px;line-height:14px;color:#262626;">Mute</div>
<div class="a cb" style="left:1152px;top:175px;width:14px;height:14px"></div>
<div class="a dl" style="left:1170.6px;top:173.5px;font-size:11px;line-height:14px;color:#262626;">Lock</div>
<div class="a cb" style="left:1152px;top:192px;width:14px;height:14px"></div>
<div class="a dl" style="left:1170.6px;top:190.5px;font-size:11px;line-height:14px;color:#262626;">No autofades</div>
<div class="a cb" style="left:1152px;top:209px;width:14px;height:14px"></div>
<div class="a dl" style="left:1170.6px;top:207.5px;font-size:11px;line-height:14px;color:#262626;">Play all takes</div>
<div class="a dl" style="left:813.7px;top:234.3px;font-size:11.85px;line-height:14px;color:#262626;">Take properties:  3 takes selected</div>
<div class="a grp" style="left:803px;top:248px;width:451px;height:163px;"></div>
<div class="a dl" style="left:811.5px;top:262.0px;font-size:11px;line-height:14px;color:#262626;">Take name:</div>
<div class="a inp dl" style="left:887px;top:261px;width:359px;height:19px;line-height:17px;padding-left:4px;color:#1a1a1a"></div>
<div class="a dl" style="left:811.5px;top:291.4px;font-size:11px;line-height:14px;color:#262626;">Start in source:</div>
<div class="a inp dl" style="left:902px;top:289px;width:78px;height:19px;line-height:17px;padding-left:4px;color:#1a1a1a">0:00.000</div>
<div class="a dl" style="left:1040.6px;top:291.0px;font-size:11px;line-height:14px;color:#262626;">Pitch adjust (semitones):</div>
<div class="a inp dl" style="left:1174px;top:290px;width:71px;height:20px;line-height:18px;padding-left:4px;color:#1a1a1a">0.000000</div>
<div class="a dl" style="left:811.5px;top:317.0px;font-size:11px;line-height:14px;color:#262626;">Playback rate:</div>
<div class="a " style="left:899px;top:311px;width:84px;height:26px;border-radius:4px;background:#56749a"></div>
<div class="a inp dl" style="left:902px;top:314px;width:78px;height:20px;line-height:18px;padding-left:4px;color:#1a1a1a"></div>
<div class="a cbc" style="left:1038px;top:316px;width:14px;height:14px"></div>
<svg class="a" style="left:1038px;top:316px" width="14" height="14"><path d="M3.2 7.2 L6 10.3 L11 3.6" fill="none" stroke="#fff" stroke-width="1.8"/></svg>
<div class="a dl" style="left:1056.6px;top:314.3px;font-size:11px;line-height:14px;color:#262626;">Preserve pitch when changing rate</div>
<div class="a dl" style="left:811.5px;top:351.0px;font-size:11px;line-height:14px;color:#262626;">Volume/pan:</div>
<div class="a " style="left:883px;top:347px;width:138px;height:21px;background:#e3e3e3"></div>
<div class="a " style="left:968px;top:350px;width:19px;height:16px;background:linear-gradient(90deg,#fafafa,#d8d8d8);border:1px solid #9a9a9a;border-radius:4px;box-shadow:0 2px 2px rgba(0,0,0,0.25)"></div>
<div class="a " style="left:977px;top:350px;width:1px;height:18px;background:#444"></div>
<div class="a " style="left:1023px;top:347px;width:65px;height:21px;background:#e3e3e3"></div>
<div class="a " style="left:1049px;top:350px;width:13px;height:16px;background:linear-gradient(90deg,#fafafa,#d8d8d8);border:1px solid #9a9a9a;border-radius:4px;box-shadow:0 2px 2px rgba(0,0,0,0.25)"></div>
<div class="a " style="left:1055px;top:350px;width:1px;height:18px;background:#444"></div>
<div class="a dl" style="left:1097.4px;top:351.3px;font-size:11px;line-height:14px;color:#262626;">0.00dB</div>
<div class="a dl" style="left:1142px;top:351.3px;font-size:11px;line-height:14px;color:#262626;">center</div>
<div class="a btnd" style="left:1183px;top:346px;width:68px;height:23px;line-height:21px;padding-top:1px">Normalize</div>
<div class="a dl" style="left:811.5px;top:385.2px;font-size:11px;line-height:14px;color:#262626;">Channel mode:</div>
<div class="a btn" style="left:894px;top:382px;width:119px;height:23px;line-height:21px;padding-top:1px">Normal</div>
<div class="a cb" style="left:1021px;top:388px;width:14px;height:14px"></div>
<div class="a dl" style="left:1039.5px;top:386.4px;font-size:11px;line-height:14px;color:#262626;">Invert phase</div>
<div class="a btnd" style="left:1127px;top:382px;width:124px;height:23px;line-height:21px;padding-top:1px">Take envelopes..</div>
<div class="a dl" style="left:813.7px;top:420.2px;font-size:12px;line-height:14px;color:#262626;">Take pitch shift/time stretch mode</div>
<div class="a grp" style="left:803px;top:434px;width:451px;height:61px;"></div>
<div class="a dd" style="left:807px;top:441px;width:160px;height:17px;line-height:15px;padding-left:5px;">Project default</div>
<svg class="a" style="left:951px;top:443px" width="10" height="13"><path d="M2 5 L5 2 L8 5 M2 8 L5 11 L8 8" fill="none" stroke="#333" stroke-width="1.2"/></svg>
<div class="a dd" style="left:970px;top:441px;width:282px;height:17px;line-height:15px;padding-left:5px;background:linear-gradient(#d4d5d5,#c8caca);border-color:#8f9191;"></div>
<svg class="a" style="left:1236px;top:443px" width="10" height="13"><path d="M2 5 L5 2 L8 5 M2 8 L5 11 L8 8" fill="none" stroke="#8a8c8c" stroke-width="1.2"/></svg>
<div class="a dl" style="left:812.4px;top:471.3px;font-size:11px;line-height:14px;color:#262626;">Stretch marker fade size:</div>
<div class="a inp dl" style="left:950px;top:470px;width:43px;height:19px;line-height:17px;padding-left:4px;color:#1a1a1a">2.5</div>
<div class="a dl" style="left:1001px;top:471.0px;font-size:11px;line-height:14px;color:#262626;">ms</div>
<div class="a cb" style="left:1028px;top:474px;width:14px;height:14px"></div>
<div class="a dl" style="left:1046.6px;top:472.6px;font-size:11px;line-height:14px;color:#262626;">Optimize for tonal content</div>
<div class="a dl" style="left:813.7px;top:504.0px;font-size:12px;line-height:14px;color:#262626;">Take media source</div>
<div class="a grp" style="left:803px;top:519px;width:451px;height:96px;"></div>
<div class="a inp dl" style="left:821px;top:527px;width:411px;height:23px;line-height:21px;padding-left:4px;color:#1a1a1a"></div>
<div class="a cb" style="left:823px;top:559px;width:14px;height:14px"></div>
<div class="a dl" style="left:841.5px;top:557.5px;font-size:11px;line-height:14px;color:#262626;">Section:</div>
<div class="a inp dl" style="left:894px;top:555px;width:78px;height:19px;line-height:17px;padding-left:4px;color:#a0a0a0;border-color:#9a9a9a">0:00.000</div>
<div class="a dl" style="left:981.4px;top:559.6px;font-size:11px;line-height:14px;color:#7c7f7f;">Length:</div>
<div class="a inp" style="left:1026px;top:555px;width:78px;height:20px;border-color:#9a9a9a"></div>
<div class="a dl" style="left:1117px;top:559.0px;font-size:11px;line-height:14px;color:#7c7f7f;">Fade:</div>
<div class="a inp" style="left:1152px;top:555px;width:51px;height:20px;border-color:#9a9a9a"></div>
<div class="a dl" style="left:1210px;top:559.0px;font-size:11px;line-height:14px;color:#7c7f7f;">ms</div>
<div class="a cb" style="left:823px;top:586px;width:14px;height:14px"></div>
<div class="a dl" style="left:841.5px;top:584.4px;font-size:11px;line-height:14px;color:#262626;">Reverse</div>
<div class="a btn" style="left:936px;top:582px;width:83px;height:24px;line-height:22px;padding-top:1px">Properties...</div>
<div class="a btn" style="left:1026px;top:582px;width:112px;height:24px;line-height:22px;padding-top:1px">Choose new file...</div>
<div class="a btnd" style="left:1145px;top:582px;width:87px;height:24px;line-height:22px;padding-top:1px">Rename file...</div>
<div class="a btn" style="left:800px;top:624px;width:88px;height:24px;line-height:22px;padding-top:1px">Nudge/Set...</div>
<div class="a btnd" style="left:894px;top:624px;width:87px;height:24px;line-height:22px;padding-top:1px">Take FX...</div>
<div class="a btn" style="left:1038px;top:624px;width:70px;height:24px;line-height:22px;padding-top:1px">OK</div>
<div class="a btn" style="left:1113px;top:624px;width:70px;height:24px;line-height:22px;padding-top:1px">Cancel</div>
<div class="a btnd" style="left:1188px;top:624px;width:70px;height:24px;line-height:22px;padding-top:1px">Apply</div>
</body></html>
